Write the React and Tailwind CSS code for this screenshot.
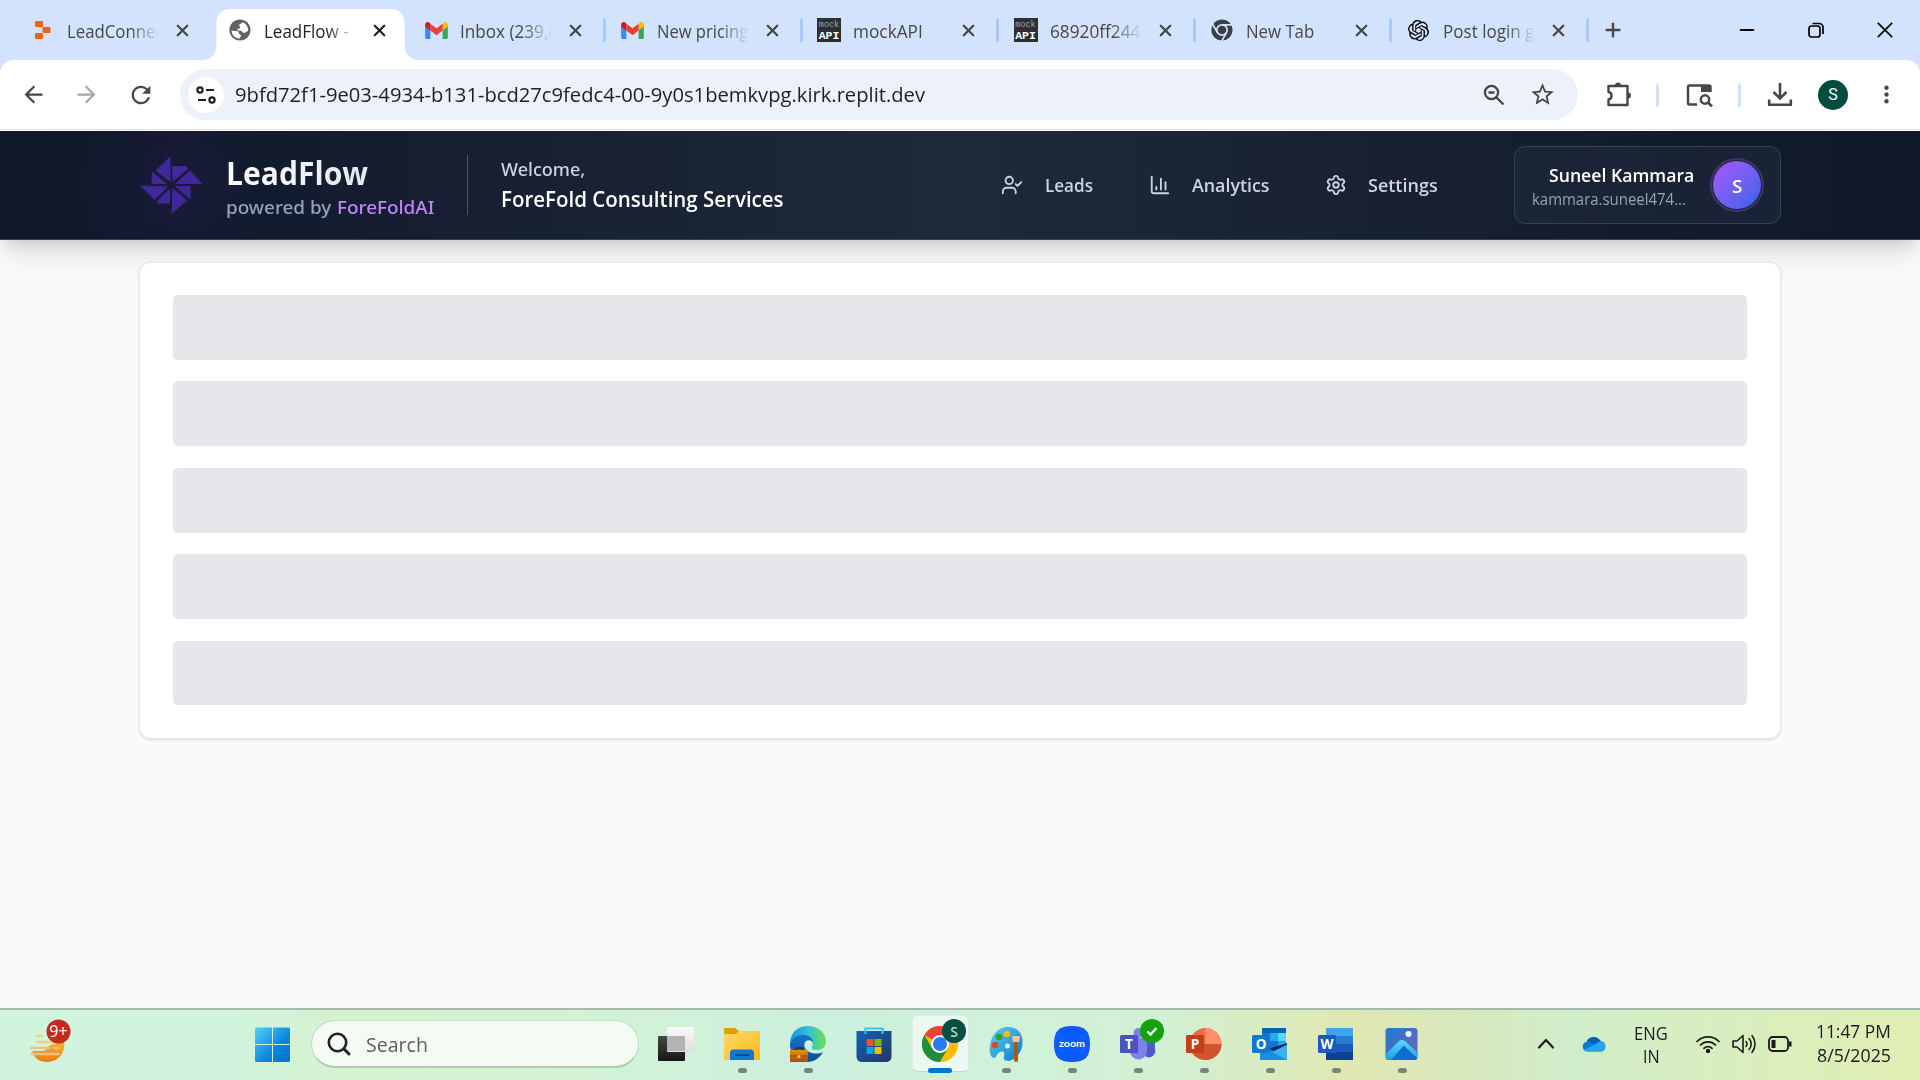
import React, { useLayoutEffect, useRef, useState } from "react";
import { UserCheck, ChartColumn, Settings, X, Plus, Minus } from "lucide-react";
import { SiOpenai } from "react-icons/si";
import { MdArrowBack, MdArrowForward, MdRefresh, MdStarBorder, MdMoreVert } from "react-icons/md";

/* Single line of text condensed or stretched to an exact width. */
function Fit({ w, className = "", children }) {
  const ref = useRef(null);
  const [s, setS] = useState(1);
  useLayoutEffect(() => {
    const n = ref.current.offsetWidth;
    if (n) setS(w / n);
  }, [w]);
  return (
    <span className={"block shrink-0 whitespace-nowrap " + className} style={{ width: w }}>
      <span ref={ref} className="inline-block origin-left" style={{ transform: `scaleX(${s})` }}>
        {children}
      </span>
    </span>
  );
}

const Gmail = () => (
  <svg viewBox="0 0 24 18" className="h-[17px] w-[23px]">
    <path d="M0 3v13.4C0 17.300.7 18 1.600 18H5.500V7.500z" fill="#4285f4" />
    <path d="M24 3v13.400c0 .9-.7 1.600-1.600 1.600H18.500V7.500z" fill="#34a853" />
    <path d="M18.500 1.800V9L24 4.900V2.700C24 0 21 -.8 19.300 .900z" fill="#fbbc04" />
    <path d="M5.500 9V1.800L12 6.700l6.500-4.900V9L12 13.900z" fill="#ea4335" />
    <path d="M0 2.700v2.200L5.500 9V1.800L4.700 .9C3 -.8 0 0 0 2.700z" fill="#c5221f" />
  </svg>
);

const Mock = () => (
  <span className="flex h-6 w-6 flex-col items-center bg-[#2d2f31] pt-[3px] font-['Liberation_Mono',monospace] text-[8.500px] leading-[8px] text-[#9aa7b5]">
    <span>mock</span>
    <span className="text-[11.500px] leading-[13px] font-bold text-white">API</span>
  </span>
);

const Replit = () => (
  <svg viewBox="0 0 16 18" className="h-[18px] w-4">
    <g fill="#f26207">
      <rect width="8" height="6" rx="1" />
      <rect x="7.500" y="6" width="8" height="6" rx="1" />
      <rect y="12" width="8" height="6" rx="1" />
    </g>
  </svg>
);

const Globe = () => (
  <svg viewBox="0 0 22 22" className="h-[22px] w-[22px]">
    <circle cx="11" cy="11" r="10.600" fill="#5f6368" />
    <path d="M13.500 3.200c-.6 1.600-3.200 1.200-3.400 2.800-.2 1.200 1.200 1 1 2.400-.2 1.200-2.200.8-2.700 2-.4 1.200 1.400 1.400 2.800 1.400 2 0 2 2.200 3.800 2.200 1.600 0 2-1.800 4.200-2C19.400 7.600 17 4.400 13.500 3.200zM2.600 11.200c1.400 1 3 .6 4.600.8 1.800 0 2.800 1 2.800 2.400 0 1.200 2 .8 2 2.400 0 1.200-1.200 1.400-1.400 2.600C6 19.200 2.600 16 2.600 11.200z" fill="#fff" />
  </svg>
);

const ChromeMono = () => (
  <svg viewBox="0 0 22 22" className="h-[22px] w-[22px]">
    <circle cx="11" cy="11" r="10.600" fill="#3c4043" />
    <g fill="none" stroke="#d3e3fd" strokeWidth="1.700">
      <circle cx="11" cy="11" r="5.200" />
      <path d="M11 5.800h10M6.500 13.600L1.500 5M15.500 13.600L10.500 22.300" />
    </g>
  </svg>
);

const tabs = [
  { icon: <Replit />, t: "LeadConnec", w: 97, fade: true },
  { icon: <Globe />, t: "LeadFlow -", w: 85, active: true, fade: true },
  { icon: <Gmail />, t: "Inbox (239,6", w: 98, sep: true, fade: true },
  { icon: <Gmail />, t: "New pricing", w: 91, sep: true, fade: true },
  { icon: <Mock />, t: "mockAPI", w: 70, sep: true },
  { icon: <Mock />, t: "68920ff244", w: 90, sep: true, fade: true },
  { icon: <ChromeMono />, t: "New Tab", w: 68, sep: true },
  { icon: <SiOpenai className="h-[21px] w-[21px] text-black" />, t: "Post login g", w: 92, sep: true, fade: true },
];

function Tab({ tab }) {
  return (
    <div className="relative h-[60px] w-[196.5px] shrink-0">
      {tab.active && (
        <svg viewBox="0 0 218 51" className="absolute top-[9px] left-[-10px] h-[51px] w-[218px]">
          <path d="M0 51C9 51 14.500 45 14.500 36V14C14.500 5 20 0 29 0H188c9 0 14.500 5 14.500 14V36c0 9 6 15 15 15z" fill="#fff" />
        </svg>
      )}
      <div className="relative flex h-full items-center">
        <span className="ml-[16px] flex w-6 justify-center">{tab.icon}</span>
        <span
          className={
            "ml-[12px] w-[100px] shrink-0 pt-0.5 text-[18px] leading-[26px] " +
            (tab.active ? "text-[#1f1f1f]" : "text-[#474747]") +
            (tab.fade ? " [mask-image:linear-gradient(to_right,black_62px,transparent_92px)]" : "")
          }
        >
          <Fit w={tab.w}>{tab.t}</Fit>
        </span>
        <X className={"ml-[6px] h-[19px] w-[19px] shrink-0 " + (tab.active ? "text-[#1f1f1f]" : "text-[#454746]")} strokeWidth={2.800} />
      </div>
      {tab.sep && <span className="absolute top-[18px] -right-[1.500px] h-6 w-[3px] rounded-full bg-[#a8c7fa]" />}
    </div>
  );
}

function Toolbar() {
  return (
    <div className="bg-[#d3e3fd]">
      <div className="flex h-[69px] items-center rounded-t-[14px] bg-white text-[#474747]">
        <MdArrowBack className="ml-[20px] h-[27px] w-[27px]" />
        <MdArrowForward className="ml-[26px] h-[27px] w-[27px] text-[#a8a8a8]" />
        <MdRefresh className="ml-[27px] h-[28px] w-[28px]" />
        <div className="ml-[25px] flex h-[51px] w-[1398px] shrink-0 items-center rounded-full bg-[#ecf1fa]">
          <span className="ml-[8px] flex h-9 w-9 items-center justify-center rounded-full bg-white">
            <svg viewBox="0 0 20 18" className="h-[18px] w-5" fill="none" stroke="#1f1f1f" strokeWidth="2.200">
              <circle cx="4" cy="4" r="2.600" />
              <path d="M10 4h8M2 14h8" />
              <circle cx="16" cy="14" r="2.600" />
            </svg>
          </span>
          <Fit w={690} className="-mt-[2px] ml-[11px] text-[20.500px] leading-[28px] text-[#1f1f1f]">
            9bfd72f1-9e03-4934-b131-bcd27c9fedc4-00-9y0s1bemkvpg.kirk.replit.dev
          </Fit>
          <svg viewBox="0 0 22 22" className="ml-auto h-[22px] w-[22px]" fill="none" stroke="#474747" strokeWidth="2.300">
            <circle cx="8.500" cy="8.500" r="6.600" />
            <path d="M13.500 13.500l7 7M5.500 8.500h6" />
          </svg>
          <MdStarBorder className="mr-[22px] ml-[24px] h-[27px] w-[27px]" />
        </div>
        <svg viewBox="0 0 26 26" className="ml-[28px] h-[26px] w-[26px] -translate-y-px" fill="none" stroke="#474747" strokeWidth="2.400" strokeLinejoin="round">
          <path d="M2.500 5h19v19h-19v-5.500c4-.5 4-7 0-7.500z" />
          <path d="M9 4.500a3 3 0 0 1 6 0zM22 11.500a3 3 0 0 1 0 6z" fill="#474747" stroke="none" />
        </svg>
        <span className="ml-[24px] h-6 w-[3px] rounded-full bg-[#d3e3fd]" />
        <svg viewBox="0 0 28 24" className="ml-[27px] h-6 w-7" fill="none" stroke="#474747" strokeWidth="2.500">
          <path d="M11 21.500H3.500a1.500 1.500 0 0 1-1.500-1.500V4a1.500 1.500 0 0 1 1.500-1.500H23a1.500 1.500 0 0 1 1.500 1.500v5" />
          <path d="M15 2h10v7H15z" fill="#474747" stroke="none" />
          <circle cx="19" cy="16.500" r="4.200" />
          <path d="M22 19.500l4 4" />
        </svg>
        <span className="ml-[24px] h-6 w-[3px] rounded-full bg-[#d3e3fd]" />
        <svg viewBox="0 0 26 26" className="ml-[26px] h-[26px] w-[26px]" fill="none" stroke="#474747" strokeWidth="2.600">
          <path d="M13 1v15M6.500 10l6.500 6.500 6.500-6.500M2.200 17.500v5.300h21.600v-5.300" />
        </svg>
        <span className="ml-[25px] flex h-[30px] w-[30px] items-center justify-center rounded-full bg-[#004d40] font-['Roboto',sans-serif] text-[16px] text-white">S</span>
        <MdMoreVert className="ml-[25px] h-[27px] w-[27px]" />
      </div>
      <div className="h-[2px] border-t border-[#dcdfe3] bg-white" />
    </div>
  );
}

/* Four two-part blades arranged around the centre. */
const Pinwheel = () => (
  <svg viewBox="0 0 62 58" className="h-[58px] w-[62px]" fill="#40279b">
    <path d="M30.500 0V26L15.500 14.500zM12 15.500L27 28H11.500z" />
    <path d="M32 10H46L48.500 12.500 32.500 26zM50 14.500L62.500 28H34.500z" />
    <path d="M34.500 30H50.500V43.500z M32.500 32L47 44.500 31.500 58z" />
    <path d="M0 29.500L28 30.500 14.500 44zM16.500 45.500L30 32.500V47.500H18z" />
  </svg>
);

function AppHeader() {
  return (
    <header className="relative flex h-[109px] items-center border-b border-[#334155] bg-linear-to-r from-[#0f172a] via-[#1e293b] to-[#0f172a] pl-[140px] shadow-[0_20px_25px_-5px_rgba(0,0,0,0.1),0_8px_14px_-5px_rgba(0,0,0,0.12)]">
      <div className="absolute top-0 left-[80px] h-[108px] w-[180px] bg-[radial-gradient(circle_at_center,rgba(88,28,135,0.13),transparent_88px)]" />
      <div className="relative">
        <Pinwheel />
      </div>
      <div className="relative ml-[24px] w-[208px]">
        <Fit w={142} className="translate-y-[3px] text-[32px] leading-[38px] font-bold">
          <span className="bg-linear-to-r from-white to-[#e2e8f0] bg-clip-text text-transparent">LeadFlow</span>
        </Fit>
        <div className="mt-[4px] flex text-[18.500px] leading-[27px] font-medium">
          <Fit w={105} className="font-['Noto_Sans',sans-serif] text-[#94a3b8]">powered by</Fit>
          <Fit w={97} className="ml-[6px] font-['Noto_Sans',sans-serif] text-[#c084fc]">ForeFoldAI</Fit>
        </div>
      </div>
      <div className="ml-[33px] h-[60px] w-px bg-[#475569]" />
      <div className="ml-[33px]">
        <Fit w={84} className="font-['Noto_Sans',sans-serif] text-[18.500px] leading-[28px] font-medium text-[#cbd5e1]">Welcome,</Fit>
        <Fit w={283} className="text-[21px] leading-[32px] font-semibold text-white">ForeFold Consulting Services</Fit>
      </div>
      <nav className="ml-[217px] flex items-center text-[18.500px] leading-[28px] font-semibold text-[#cbd5e1]">
        <UserCheck className="h-[22px] w-[22px]" strokeWidth={2} />
        <Fit w={48} className="ml-[22px]">Leads</Fit>
        <ChartColumn className="ml-[56px] h-[22px] w-[22px]" strokeWidth={2} />
        <Fit w={77} className="ml-[21px]">Analytics</Fit>
        <Settings className="ml-[56px] h-[22px] w-[22px]" strokeWidth={2} />
        <Fit w={70} className="ml-[21px]">Settings</Fit>
      </nav>
      <div className="ml-[76px] flex h-[78px] w-[267px] items-center rounded-[11px] border border-[#334155] bg-[#1e293b]/60 pl-[17px]">
        <div className="w-[161px]">
          <Fit w={145} className="ml-[17px] text-[18.500px] leading-[27px] font-semibold text-white">Suneel Kammara</Fit>
          <Fit w={154} className="text-[16.500px] leading-[22px] text-[#94a3b8]">kammara.suneel474...</Fit>
        </div>
        <span className="ml-[17px] flex h-[54px] w-[54px] items-center justify-center rounded-full border-2 border-[#a855f7]/30">
          <span className="flex h-[48px] w-[48px] items-center justify-center rounded-full bg-linear-to-br from-[#a855f7] to-[#2563eb] pt-0.5 text-[18.500px] font-semibold text-white">S</span>
        </span>
      </div>
    </header>
  );
}

const Chrome = () => (
  <svg viewBox="0 0 36 36" className="h-9 w-9">
    <circle cx="18" cy="18" r="18" fill="#fbbc04" />
    <path d="M18 18L2.400 9A18 18 0 0 1 33.600 9H18z" fill="#ea4335" />
    <path d="M18 18l7.800 4.500L18 36A18 18 0 0 1 2.400 9l7.800 13.500z" fill="#1e8e3e" />
    <path d="M18 9H33.600A18 18 0 0 1 18 36l7.800-13.500z" fill="#fbbc04" />
    <circle cx="18" cy="18" r="9" fill="#fff" />
    <circle cx="18" cy="18" r="7" fill="#2a7bf0" />
  </svg>
);

const TaskView = () => (
  <svg viewBox="0 0 36 36" className="h-9 w-9">
    <defs>
      <linearGradient id="tv1" x2="0" y2="1"><stop stopColor="#474747" /><stop offset="1" stopColor="#161616" /></linearGradient>
      <linearGradient id="tv2" x2="0" y2="1"><stop stopColor="#fafafa" /><stop offset="1" stopColor="#dedede" /></linearGradient>
    </defs>
    <rect x="0" y="10" width="27" height="25" rx="1" fill="url(#tv1)" />
    <rect x="9" y="1" width="27" height="25" rx="1" fill="url(#tv2)" />
    <path d="M9 10h18v15H9z" fill="#b3b3b3" />
  </svg>
);

const Folder = () => (
  <svg viewBox="0 0 36 36" className="h-9 w-9">
    <defs><linearGradient id="fo" x2="1" y2="1"><stop stopColor="#ffd969" /><stop offset="1" stopColor="#fbb917" /></linearGradient></defs>
    <path d="M0 3a1 1 0 0 1 1-1h10l4 3h20v10H0z" fill="#dfa00b" />
    <path d="M0 8h12l3-3h20a1 1 0 0 1 1 1v28H1a1 1 0 0 1-1-1z" fill="url(#fo)" />
    <path d="M6 34V27a3.500 3.500 0 0 1 3.500-3.500h17A3.500 3.500 0 0 1 30 27v7z" fill="#0f78d0" />
    <path d="M11 29h14" stroke="#0b4a96" strokeWidth="1.800" />
  </svg>
);

const Edge = () => (
  <svg viewBox="0 0 36 36" className="h-9 w-9">
    <defs>
      <linearGradient id="ed1" x2="1"><stop stopColor="#1a8fdc" /><stop offset=".5" stopColor="#33c0dc" /><stop offset="1" stopColor="#6be04a" /></linearGradient>
      <linearGradient id="ed2" x2="0" y2="1"><stop stopColor="#1477c8" /><stop offset="1" stopColor="#0f4d96" /></linearGradient>
      <linearGradient id="ed3" x2="0" y2="1"><stop stopColor="#e59209" /><stop offset="1" stopColor="#a84c05" /></linearGradient>
    </defs>
    <path d="M0 17C1 5 9 0 18 0c10 0 18 7 18 15 0 6-4 9-9 9-4 0-6-1-5-3 2-3 0-7-5-8-8-2-15 2-17 10z" fill="url(#ed1)" />
    <path d="M0 18C3 11 9 8 15 9c5 1 8 4 8 7-2-2-5-2-7-1-3 3-2 8 3 11 5 2 10 2 14 0-3 6-9 10-16 10C7 36 0 28 0 18z" fill="url(#ed2)" />
    <rect y="24" width="18" height="12" rx="1" fill="url(#ed3)" />
    <path d="M0 30h18" stroke="#8c3d04" strokeWidth=".8" />
    <path d="M6 24v-2h6v2" fill="none" stroke="#332b20" strokeWidth="1.500" />
    <circle cx="9" cy="30.500" r="1.500" fill="#ffd23b" />
  </svg>
);

const Store = () => (
  <svg viewBox="0 0 36 36" className="h-9 w-9">
    <defs><linearGradient id="st" x2="1" y2="1"><stop stopColor="#0c66b8" /><stop offset="1" stopColor="#27355e" /></linearGradient></defs>
    <path d="M9.500 8V2.500h17V8" fill="none" stroke="#35c3ee" strokeWidth="2.200" />
    <path d="M.5 5h35v26a5 5 0 0 1-5 5h-25a5 5 0 0 1-5-5z" fill="url(#st)" />
    <path d="M9.500 8V5M26.500 8V5" stroke="#35c3ee" strokeWidth="2.200" />
    <path d="M10.500 13h7v7h-7z" fill="#f25022" /><path d="M18.500 13h7v7h-7z" fill="#7fba00" />
    <path d="M10.500 21h7v7h-7z" fill="#00a4ef" /><path d="M18.500 21h7v7h-7z" fill="#ffb900" />
  </svg>
);

const Paint = () => (
  <svg viewBox="0 0 36 36" className="h-9 w-9">
    <defs><linearGradient id="pa" x2="1" y2="1"><stop stopColor="#55d3f8" /><stop offset="1" stopColor="#0f78c8" /></linearGradient></defs>
    <path d="M20 1C31 1 35 9 34.500 17 34 28 26 34 21 35c-5 0-6-2-5-5 1-4-1-6-4-4-3 1-3 5-6 6-4-1-5-6-4-12C3 9 10 1 20 1z" fill="url(#pa)" />
    <circle cx="7" cy="19" r="3.300" fill="#dd4a1d" /><circle cx="11" cy="11" r="3.300" fill="#34a01c" />
    <circle cx="19" cy="8" r="3.300" fill="#fbb914" /><circle cx="19.500" cy="20" r="2.500" fill="#d9f5ee" />
    <path d="M26 15h4v19a2 2 0 0 1-4 0z" fill="#a55a12" />
    <path d="M24 10h8l-1 6h-6z" fill="#ecc9a5" />
  </svg>
);

const Zoom = () => (
  <svg viewBox="0 0 36 36" className="h-9 w-9">
    <path d="M18 0C31 0 36 5 36 18S31 36 18 36 0 31 0 18 5 0 18 0z" fill="#0b5cff" />
    <text x="18" y="20.800" textAnchor="middle" textLength="26" lengthAdjust="spacingAndGlyphs" fill="#fff" fontFamily="Lato, sans-serif" fontWeight="700" fontSize="10">zoom</text>
  </svg>
);

const Letter = ({ c, fill }) => (
  <g>
    <rect x="0" y="9" width="18" height="18" rx="1.500" fill={fill} />
    <text x="9" y="22.800" textAnchor="middle" fill="#fff" fontFamily="Open Sans, sans-serif" fontWeight="700" fontSize="13.500">{c}</text>
  </g>
);

const Teams = () => (
  <svg viewBox="0 0 36 36" className="h-9 w-9">
    <path d="M22 12h13v11a6 6 0 0 1-12 4z" fill="#5059c9" />
    <circle cx="18.500" cy="7" r="5" fill="#7b83eb" />
    <path d="M10 12h17v13a8.500 8.500 0 0 1-17 0z" fill="#7b83eb" />
    <Letter c="T" fill="#4b53bc" />
  </svg>
);
const Ppt = () => (
  <svg viewBox="0 0 36 36" className="h-9 w-9">
    <circle cx="19.500" cy="18" r="16" fill="#ed6c47" />
    <path d="M19.500 2a16 16 0 0 1 16 16h-16z" fill="#ff8f6b" />
    <path d="M3.500 18h32a16 16 0 0 1-32 0z" fill="#d35230" />
    <Letter c="P" fill="#c43e1c" />
  </svg>
);
const Outlook = () => (
  <svg viewBox="0 0 36 36" className="h-9 w-9">
    <path d="M10 2h24v22H10z" fill="#0f78d4" /><path d="M10 2h24v5H10z" fill="#0364b8" />
    <path d="M18 7h8v8h-8z" fill="#28a8ea" /><path d="M26 7h8v8h-8z" fill="#50d9ff" /><path d="M26 15h8v8h-8z" fill="#28a8ea" />
    <path d="M35 17v2L22 26l-6-3z" fill="#0a2767" />
    <path d="M8 20l14 5 13-6v15H9a1 1 0 0 1-1-1z" fill="#1490df" /><path d="M35 19v15L20 26z" fill="#35b2ef" />
    <Letter c="O" fill="#0f78d4" />
  </svg>
);
const Word = () => (
  <svg viewBox="0 0 36 36" className="h-9 w-9">
    <path d="M8 2h27v8H8z" fill="#41a5ee" /><path d="M8 10h27v8H8z" fill="#2b7cd3" />
    <path d="M8 18h27v8H8z" fill="#185abd" /><path d="M8 26h27v8H8z" fill="#103f91" />
    <Letter c="W" fill="#185abd" />
  </svg>
);
const Photos = () => (
  <svg viewBox="0 0 36 36" className="h-9 w-9">
    <defs>
      <linearGradient id="ph1" x2="1" y2="1"><stop stopColor="#167fd2" /><stop offset="1" stopColor="#7f5bb5" /></linearGradient>
      <linearGradient id="ph2" x2="0" y2="1"><stop stopColor="#5ad8fb" /><stop offset="1" stopColor="#159fe0" /></linearGradient>
      <clipPath id="phc"><rect x="1.500" y="2" width="32" height="32" rx="3" /></clipPath>
    </defs>
    <g clipPath="url(#phc)">
      <path d="M0 0h36v36H0z" fill="url(#ph1)" />
      <path d="M4 36L17 21q2-2 4 0l14 13v2z" fill="#0b6fcb" />
      <path d="M0 30L15 15q3-2 6 0l13 12v6L20 19.500 6 35H0z" fill="url(#ph2)" />
      <circle cx="24.500" cy="8" r="3" fill="#f3f7fb" />
    </g>
  </svg>
);

const apps = [
  { k: "taskview", icon: <TaskView /> },
  { k: "folder", icon: <Folder />, run: true },
  { k: "edge", icon: <Edge />, run: true },
  { k: "store", icon: <Store /> },
  { k: "chrome", icon: <Chrome />, active: true },
  { k: "paint", icon: <Paint />, run: true },
  { k: "zoom", icon: <Zoom />, run: true },
  { k: "teams", icon: <Teams />, run: true, check: true },
  { k: "ppt", icon: <Ppt />, run: true },
  { k: "outlook", icon: <Outlook />, run: true },
  { k: "word", icon: <Word />, run: true },
  { k: "photos", icon: <Photos />, run: true },
];

function AppButton({ app }) {
  return (
    <div className="relative flex h-[70px] w-[66px] shrink-0 items-center justify-center">
      {app.active && <span className="absolute top-[5px] left-[5px] h-[57px] w-[57px] rounded-md border border-black/5 border-b-black/15 bg-white/60" />}
      <span className="relative -mt-[2px]">{app.icon}</span>
      {app.active && (
        <>
          <span className="absolute top-[9px] left-[35px] flex h-6 w-6 items-center justify-center rounded-full bg-[#064f42] text-[14px] font-semibold text-[#b9d5cf]">S</span>
          <span className="absolute top-[58px] left-[21px] h-[5px] w-6 rounded-full bg-[#0078d4]" />
        </>
      )}
      {app.check && (
        <span className="absolute top-[9px] left-[35px] flex h-6 w-6 items-center justify-center rounded-full bg-[#13a10e]">
          <svg viewBox="0 0 12 12" className="h-3 w-3"><path d="M1.500 6.500l3 3 6-6.500" fill="none" stroke="#fff" strokeWidth="2.400" /></svg>
        </span>
      )}
      {app.run && <span className="absolute top-[58px] left-[29px] h-[5px] w-[9px] rounded-full bg-[#76877a]" />}
    </div>
  );
}

function Taskbar() {
  return (
    <footer className="flex h-[72px] items-center border-t-2 border-[#a5baab] bg-[linear-gradient(90deg,#d0f4dc_0%,#d0f4de_11%,#d5f2d0_18%,#d3f2d6_30%,#ccf0de_43%,#d0f1da_52%,#d2f0d2_61%,#e0e8b2_70%,#d9e9bc_76%,#d0edcb_82%,#d8eec2_88%,#dfeeb2_100%)] pb-[2px] text-[#1b1b1b]">
      <svg viewBox="0 0 44 46" className="ml-[28px] h-[46px] w-11 -translate-y-[3px]">
        <defs><linearGradient id="we" x2="0" y2="1"><stop stopColor="#f3b62a" /><stop offset="1" stopColor="#f07c14" /></linearGradient></defs>
        <path d="M22 27c4 0 6-3 14-4 2 12-6 21-17 21C11 44 6 40 4 33h12z" fill="url(#we)" />
        <g strokeWidth="2.600" strokeLinecap="round" stroke="#f6cf7c">
          <path d="M9 18h5M9 24h20" /><path d="M3.500 30h18M26 30h5M3.500 36h27" stroke="#e9c184" />
        </g>
        <circle cx="30.500" cy="13.500" r="12" fill="#c42b1c" />
        <text x="30.500" y="19" textAnchor="middle" fontSize="16" fill="#fff" fontFamily="Open Sans, sans-serif">9+</text>
      </svg>
      <svg viewBox="0 0 36 36" className="ml-[183px] h-9 w-9 translate-y-px">
        <defs><linearGradient id="wi" gradientUnits="userSpaceOnUse" x1="0" y1="0" x2="36" y2="36"><stop stopColor="#4fd2fd" /><stop offset=".6" stopColor="#0d84dc" /><stop offset="1" stopColor="#0071d0" /></linearGradient></defs>
        <path d="M1 .5h16v16.500H0V1.500zM18 .5h16l1 1V17H18zM0 18h17v17H1l-1-1zM18 18h17v16l-1 1H18z" fill="url(#wi)" />
      </svg>
      <div className="ml-[20px] flex h-[48px] w-[328px] items-center rounded-full border border-b-2 border-[#bfe0c1] border-b-[#aecbb0] bg-[#f3fbf4]">
        <svg viewBox="0 0 24 24" className="ml-[15px] h-6 w-6" fill="none" stroke="#222" strokeWidth="2.600" strokeLinecap="round">
          <circle cx="10.500" cy="10.500" r="8.700" /><path d="M17 17l5 5" strokeWidth="3" />
        </svg>
        <Fit w={62} className="ml-[15px] text-[20.500px] leading-[28px] text-[#5c615d]">Search</Fit>
      </div>
      <div className="ml-[4px] flex translate-y-px">
        {apps.map((a) => <AppButton key={a.k} app={a} />)}
      </div>
      <svg viewBox="0 0 18 12" className="ml-[102px] h-3 w-[18px]" fill="none" stroke="#1b1b1b" strokeWidth="2.200" strokeLinecap="round"><path d="M2 9.500l7-7.500 7 7.500" /></svg>
      <svg viewBox="0 0 24 16" className="ml-[27px] h-4 w-6">
        <path d="M5 15.500a5 5 0 0 1-.5-9.800A8 8 0 0 1 18.500 5a5.500 5.500 0 0 1 1 10.500z" fill="#0a7bd8" />
        <path d="M5 4.500A8 8 0 0 1 18.500 5L12 8z" fill="#0560b4" />
        <path d="M2 14L14.500 7.500q4-3 6.500-1.800c4 2 3.500 9.800-2 9.800H5.500Q3 15.500 2 14z" fill="#28a4ea" />
      </svg>
      <div className="ml-[28px] flex w-[34px] flex-col items-center pt-px text-[19px] leading-[23px]">
        <Fit w={34}>ENG</Fit>
        <Fit w={17}>IN</Fit>
      </div>
      <svg viewBox="0 0 24 18" className="ml-[28px] h-[18px] w-6" fill="none" stroke="#1b1b1b" strokeWidth="1.700" strokeLinecap="round">
        <path d="M1 6.500a15.500 15.500 0 0 1 22 0M4.500 10a10.600 10.600 0 0 1 15 0M8 13.300a5.700 5.700 0 0 1 8 0" />
        <circle cx="12" cy="16" r="1.300" fill="#1b1b1b" />
      </svg>
      <svg viewBox="0 0 24 20" className="ml-[12px] h-5 w-6" fill="none" stroke="#1b1b1b" strokeWidth="1.600" strokeLinejoin="round" strokeLinecap="round">
        <path d="M1 7h4l6-5.500v17L5 13H1zM14 7.500a4 4 0 0 1 0 5M17 4.500a8 8 0 0 1 0 11M20 1.500c4 5 4 12 0 17" />
      </svg>
      <svg viewBox="0 0 24 16" className="ml-[12px] h-4 w-6" fill="none" stroke="#1b1b1b" strokeWidth="1.800">
        <rect x="1" y="1" width="19" height="14" rx="3.500" /><path d="M3.500 4h4v8h-4zM21 5.500h2.500v5H21z" fill="#1b1b1b" stroke="none" />
      </svg>
      <div className="ml-[24px] flex w-[75px] flex-col items-end text-[18.500px] leading-[24px]">
        <Fit w={75} className="-translate-y-px">11:47 PM</Fit>
        <Fit w={74} className="-translate-y-px">8/5/2025</Fit>
      </div>
    </footer>
  );
}

export default function App() {
  return (
    <div className="flex h-[1080px] w-[1920px] flex-col overflow-hidden bg-[#f9fafb] font-['Open_Sans','Noto_Sans',sans-serif]">
      <div className="flex h-[60px] shrink-0 items-center bg-[#d3e3fd] pl-[15px]">
        {tabs.map((t) => <Tab key={t.t} tab={t} />)}
        <Plus className="ml-[15px] h-[22px] w-[22px] text-[#474747]" strokeWidth={2.600} />
        <Minus className="ml-[112px] h-[22px] w-[22px]" strokeWidth={2} />
        <svg viewBox="0 0 16 16" className="ml-[50px] h-4 w-4" fill="none" stroke="#000" strokeWidth="1.700">
          <rect x="1" y="4" width="11" height="11" rx="2.500" /><path d="M4.500 1.500H11a4 4 0 0 1 4 4V12" />
        </svg>
        <svg viewBox="0 0 16 16" className="ml-[53px] h-4 w-4" stroke="#000" strokeWidth="1.700"><path d="M.8.8l14.400 14.400M15.200.8L.8 15.200" /></svg>
      </div>
      <Toolbar />
      <AppHeader />
      <main className="flex-1 px-[139px] pt-[22px]">
        <section className="relative flex h-[477px] flex-col gap-[21.600px] rounded-[11px] border border-[#e5e7eb] bg-white px-[33px] pt-[32px] shadow-sm">
          {[0, 1, 2, 3, 4].map((i) => <div key={i} className="h-[64.800px] rounded-[5px] bg-[#e6e7eb]" />)}
        </section>
      </main>
      <Taskbar />
    </div>
  );
}
